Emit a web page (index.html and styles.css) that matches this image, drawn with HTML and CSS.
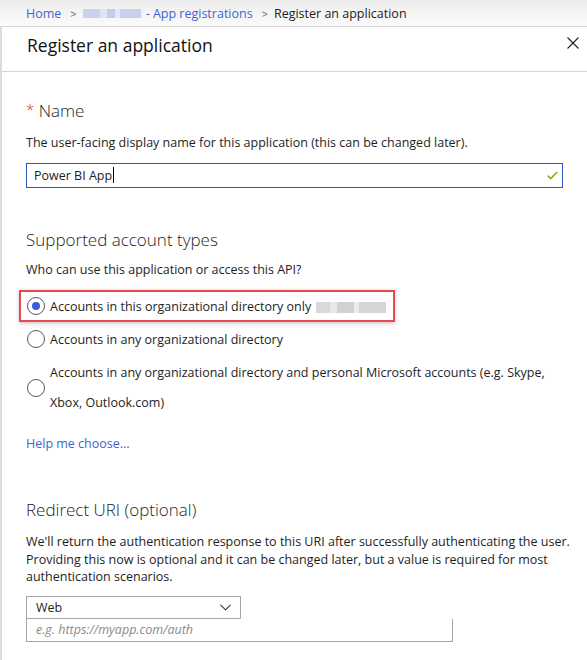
FILE: index.html
```html
<!DOCTYPE html>
<html>
<head>
<meta charset="utf-8">
<link rel="stylesheet" href="styles.css">
</head>
<body>
<div class="crumbs">
  <a class="link">Home</a>
  <span class="sep">&gt;</span>
  <span class="blur blur-blue"></span>
  <a class="link">- App registrations</a>
  <span class="sep">&gt;</span>
  <span class="current">Register an application</span>
</div>
<div class="panel">
  <div class="header">
    <h1 class="title">Register an application</h1>
    <svg class="close" width="12" height="12" viewBox="0 0 12 12"><path d="M0.5 0.5L11.5 11.5M11.5 0.5L0.5 11.5" stroke="#222" stroke-width="1.1" fill="none"/></svg>
  </div>
  <div class="content">
    <h2 class="heading h-name"><span class="req">*</span> Name</h2>
    <p class="desc d-name">The user-facing display name for this application (this can be changed later).</p>
    <div class="textbox">
      <span class="value">Power BI App</span><span class="caret"></span>
      <svg class="check" width="11" height="9" viewBox="0 0 11 9"><path d="M0.8 4.6L3.8 7.6L10.2 1" stroke="#7fba00" stroke-width="1.6" fill="none"/></svg>
    </div>

    <h2 class="heading h-acct">Supported account types</h2>
    <p class="desc d-acct">Who can use this application or access this API?</p>
    <div class="options">
      <div class="option highlight">
        <span class="radio checked"></span>
        <span class="opt-text">Accounts in this organizational directory only <span class="blur blur-gray"></span></span>
      </div>
      <div class="option o2">
        <span class="radio"></span>
        <span class="opt-text">Accounts in any organizational directory</span>
      </div>
      <div class="option o3">
        <span class="radio"></span>
        <span class="opt-text multi">Accounts in any organizational directory and personal Microsoft accounts (e.g. Skype, Xbox, Outlook.com)</span>
      </div>
    </div>
    <a class="link help">Help me choose...</a>

    <h2 class="heading h-redirect">Redirect URI (optional)</h2>
    <p class="desc d-redirect">We'll return the authentication response to this URI after successfully authenticating the user. Providing this now is optional and it can be changed later, but a value is required for most authentication scenarios.</p>
    <div class="select">
      <span>Web</span>
      <svg class="chev" width="11" height="7" viewBox="0 0 11 7"><path d="M0.5 0.8L5.5 5.8L10.5 0.8" stroke="#333" stroke-width="1.1" fill="none"/></svg>
    </div>
    <div class="uri">e.g. https://myapp.com/auth</div>
  </div>
</div>
</body>
</html>
```
FILE: styles.css
```css
* { box-sizing: border-box; }
html, body { margin: 0; padding: 0; background: #fff; }
body {
  width: 587px;
  height: 660px;
  overflow: hidden;
  font-family: "Segoe UI", "Open Sans", "Noto Sans", sans-serif;
  color: #1e1e1e;
  font-size: 12.5px;
}
.crumbs {
  height: 27px;
  display: flex;
  align-items: center;
  padding-left: 26px;
  background: linear-gradient(to bottom, #ececec 0%, #f4f4f4 45%, #fafafa 100%);
  border-bottom: 1px solid #d6d6d6;
  font-size: 12.5px;
  white-space: nowrap;
}
.link { color: #3c64d2; text-decoration: none; }
.sep { color: #666; margin: 0 6px 0 9px; font-size: 11px; }
.current { color: #222; }
.blur {
  display: inline-block;
  vertical-align: middle;
}
.blur-blue {
  width: 58px;
  height: 9px;
  margin-right: 5px;
  background: linear-gradient(to right, #c8d3ef 0 30%, #dde4f6 30% 42%, #c2cdec 42% 56%, #e3e9f7 56% 64%, #c6d1ee 64% 100%);
}
.blur-gray {
  width: 70px;
  height: 11px;
  margin-left: 2px;
  background: linear-gradient(to right, #d9d9d9 0 20%, #e8e8e8 20% 30%, #d2d2d2 30% 55%, #ececec 55% 62%, #d6d6d6 62% 100%);
}
.panel {
  border-left: 2px solid #dcdcdc;
  height: 633px;
}
.header {
  height: 45px;
  border-bottom: 1px solid #d6d6d6;
  display: flex;
  align-items: flex-start;
  justify-content: space-between;
  padding: 6px 8px 0 25px;
}
.title {
  margin: 0;
  font-size: 17.5px;
  font-weight: 400;
  line-height: 24px;
  color: #111;
}
.close { margin-top: 4px; }
.content { padding: 0 0 0 24px; }
.heading {
  margin: 0;
  font-size: 17px;
  font-weight: 300;
  line-height: 24px;
  color: #1e1e1e;
}
.req { color: #e3141e; font-size: 15px; vertical-align: 2px; }
.h-name { margin-top: 25px; }
.desc { margin: 0; line-height: 17.5px; color: #1e1e1e; }
.d-name { margin-top: 11px; }
.textbox {
  margin-top: 11px;
  width: 537px;
  height: 25px;
  border: 1px solid #2b57b8;
  display: flex;
  align-items: center;
  padding-left: 7px;
  position: relative;
}
.caret { display: inline-block; width: 1px; height: 16px; background: #000; margin-left: 1px; }
.check { position: absolute; right: 4px; top: 7px; }
.h-acct { margin-top: 40px; }
.d-acct { margin-top: 9px; }
.options { margin-top: 12px; margin-left: -7px; }
.option {
  display: flex;
  align-items: center;
  gap: 5px;
  padding-left: 8px;
}
.highlight {
  width: 376px;
  height: 32px;
  border: 2px solid #e8484e;
  box-shadow: 0 1px 4px rgba(0,0,0,0.25);
  padding-left: 6px;
}
.radio {
  flex: none;
  width: 18px;
  height: 18px;
  border-radius: 50%;
  border: 1px solid #5a5a5a;
  background: #fff;
  position: relative;
}
.radio.checked::after {
  content: "";
  position: absolute;
  left: 4px; top: 4px;
  width: 8px; height: 8px;
  border-radius: 50%;
  background: #3b5ad8;
}
.o2 { margin-top: 8px; height: 18px; }
.o3 { margin-top: 10px; }
.multi { line-height: 30px; width: 520px; }
.help { display: block; margin-top: 17px; line-height: 18px; }
.h-redirect { margin-top: 45px; }
.d-redirect { margin-top: 11px; width: 562px; }
.select {
  margin-top: 10px;
  width: 215px;
  height: 23px;
  border: 1px solid #a6a6a6;
  display: flex;
  align-items: center;
  justify-content: space-between;
  padding: 0 9px 0 9px;
}
.uri {
  width: 427px;
  height: 23px;
  border: 1px solid #a6a6a6;
  border-top: none;
  padding-left: 9px;
  line-height: 21px;
  font-style: italic;
  color: #8a8a8a;
}
```
